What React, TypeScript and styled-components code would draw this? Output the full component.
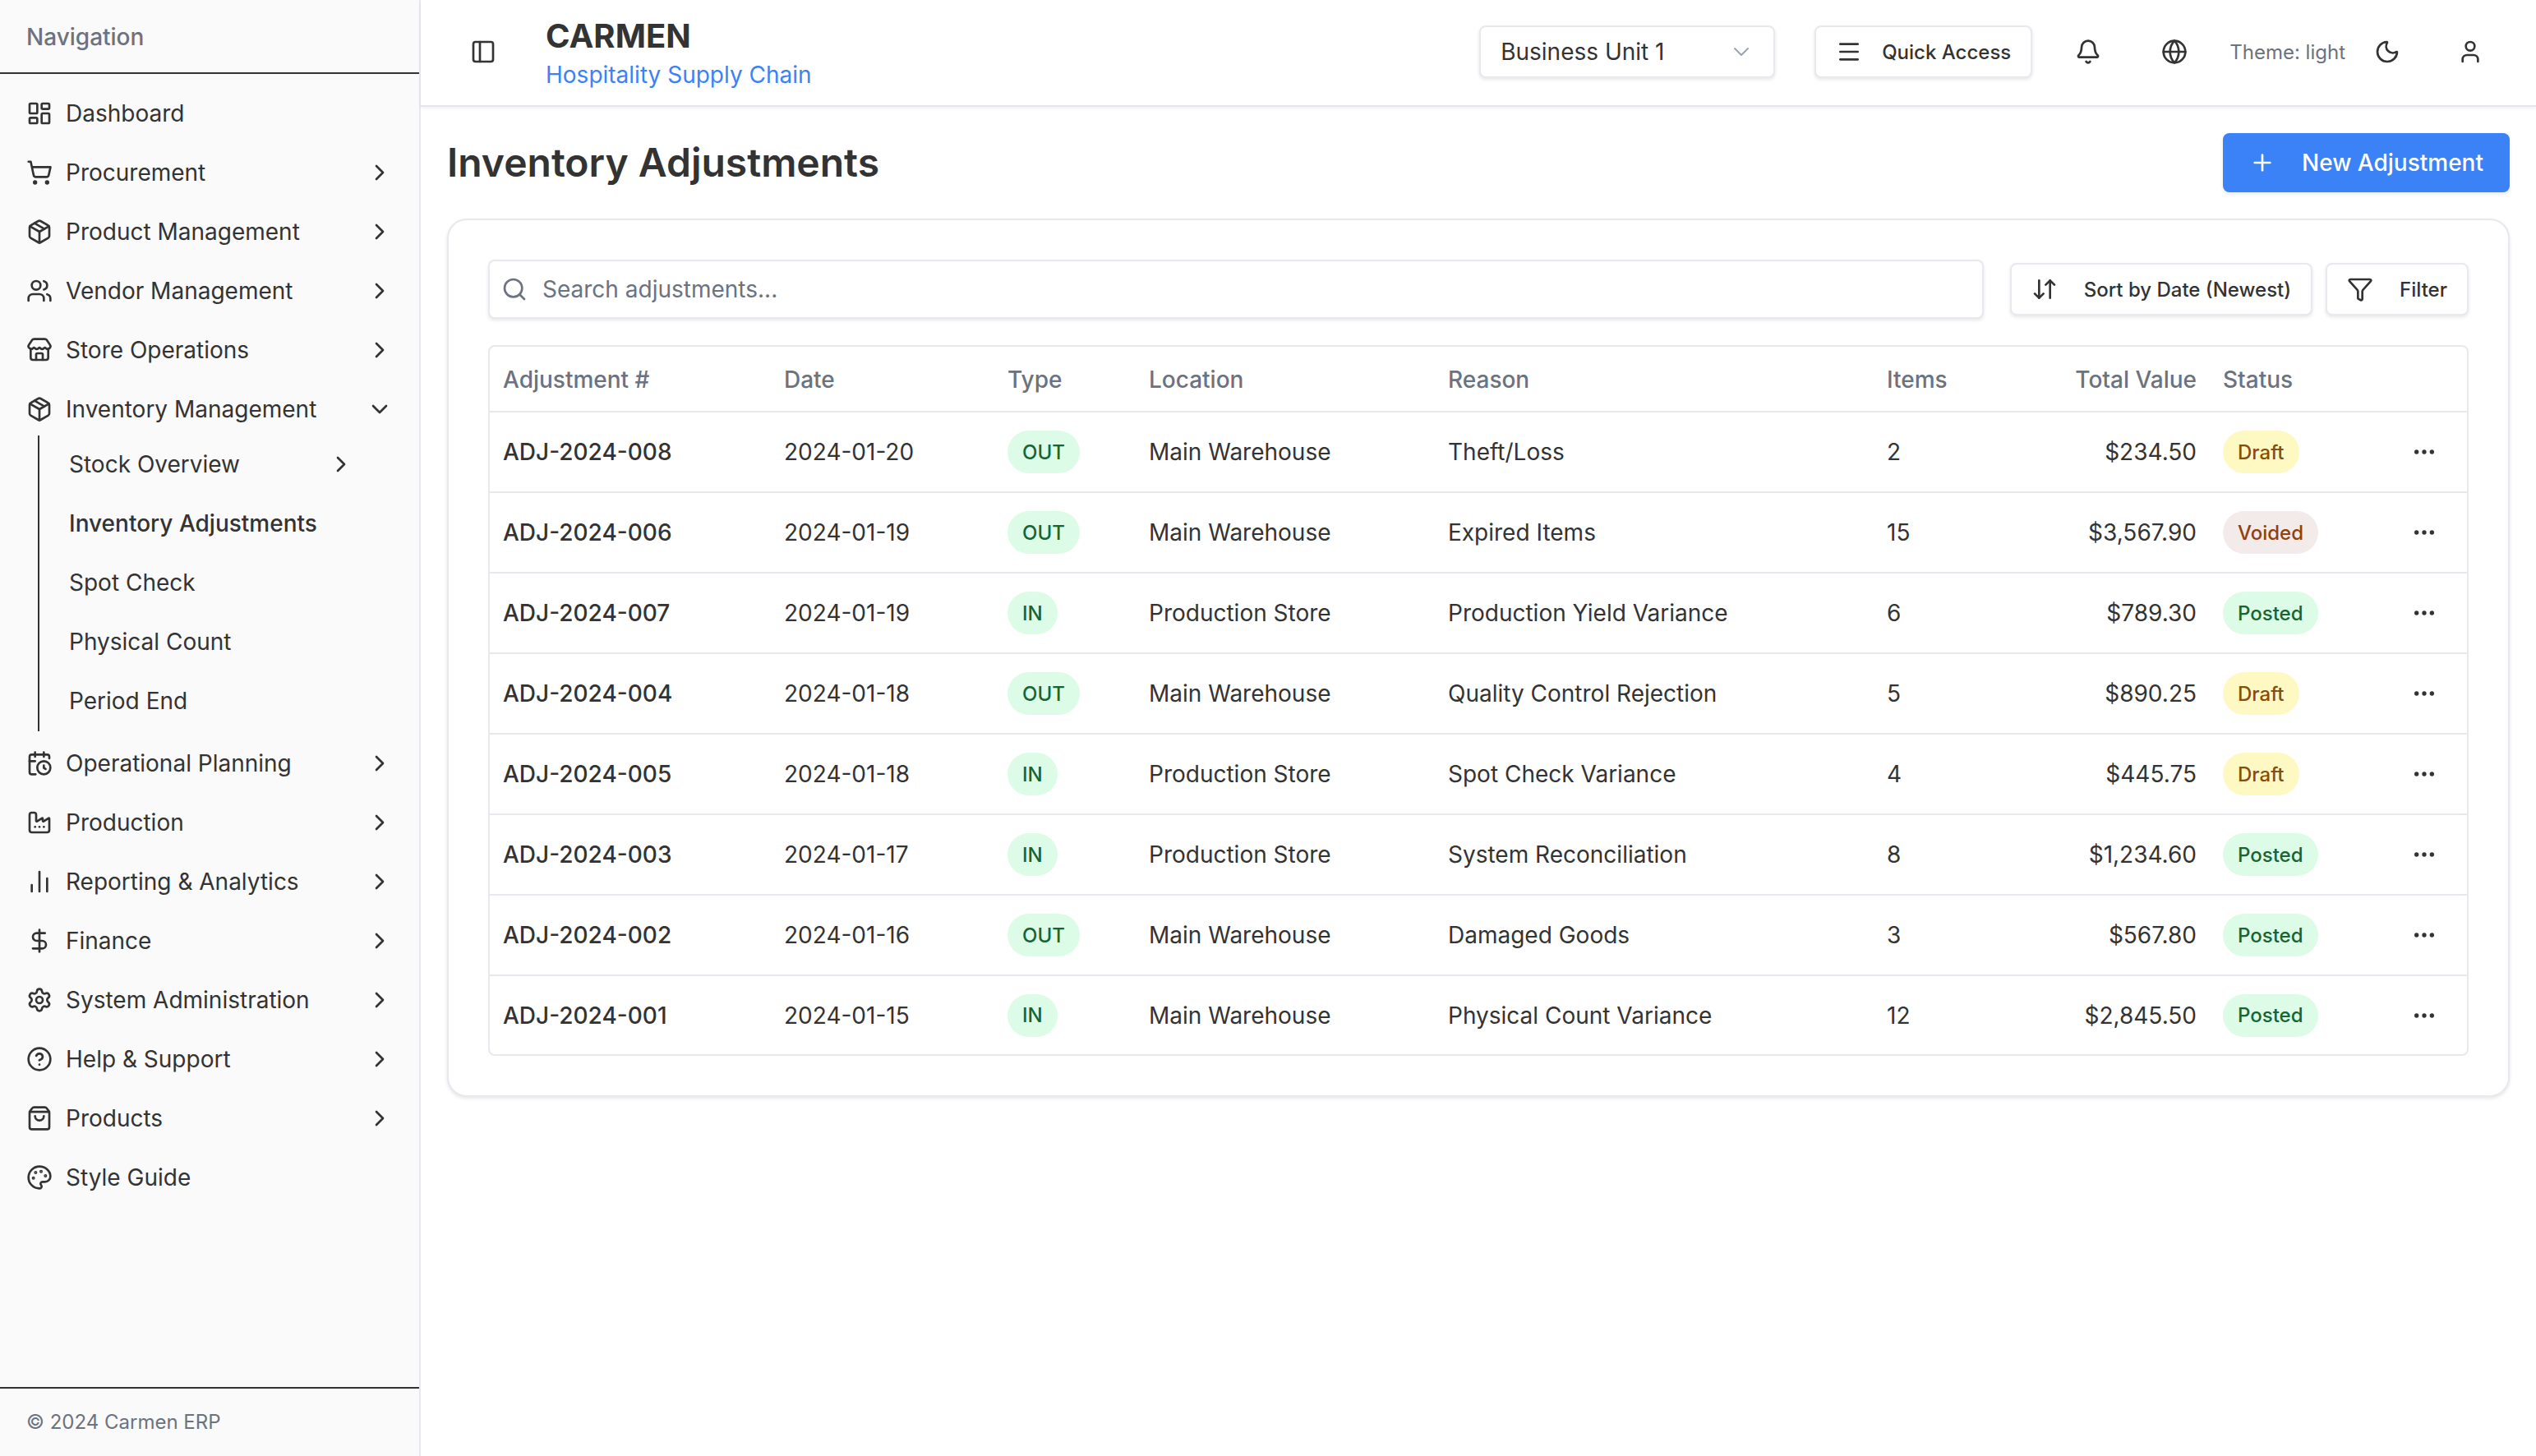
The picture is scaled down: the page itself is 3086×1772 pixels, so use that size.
import React from 'react';
import styled, { createGlobalStyle } from 'styled-components';
import {
  LayoutDashboard, ShoppingCart, Package, Users, Store, CalendarClock, Factory, ChartNoAxesColumn,
  DollarSign, Settings, CircleHelp, ShoppingBag, Palette, ChevronRight, ChevronDown, PanelLeft,
  Menu, Bell, Globe, Moon, User, Plus, Search, ArrowDownUp, Funnel, Ellipsis,
} from 'lucide-react';

const Global = createGlobalStyle`
  html, body { margin: 0; padding: 0; background: #fff; }
  body { font-family: Inter, "Liberation Sans", sans-serif; color: #333; }
  * { box-sizing: border-box; }
`;

const Shell = styled.div`
  display: flex;
  width: 3086px;
  height: 1772px;
  overflow: hidden;
`;
const Sidebar = styled.aside`
  width: 512px;
  flex: none;
  display: flex;
  flex-direction: column;
  background: #fafafa;
  border-right: 2px solid #e8e8ee;
`;
const SideHead = styled.div`
  height: 90px;
  flex: none;
  padding: 2px 32px 0;
  display: flex;
  align-items: center;
  font-size: 28px;
  font-weight: 500;
  color: #6b7280;
  border-bottom: 2px solid #333;
`;
const Nav = styled.nav`
  flex: 1;
  display: flex;
  flex-direction: column;
  gap: 8px;
  padding: 16px 32px;
`;
const NavItem = styled.div`
  height: 64px;
  display: flex;
  align-items: center;
  gap: 16px;
  font-size: 28px;
  color: #333;
`;
const NavLabel = styled.span`
  flex: 1;
`;
const SubList = styled.div`
  margin: -8px 0 -1px 14px;
  padding-left: 36px;
  padding-right: 47px;
  border-left: 2px solid #333;
  display: flex;
  flex-direction: column;
`;
const SubItem = styled.div<{ $active?: boolean }>`
  height: 72px;
  padding-bottom: 2px;
  display: flex;
  align-items: center;
  justify-content: space-between;
  font-size: 28px;
  font-weight: ${p => (p.$active ? 500 : 400)};
  color: #333;
`;
const SideFoot = styled.div`
  height: 84px;
  flex: none;
  padding: 0 32px 2px;
  display: flex;
  align-items: center;
  font-size: 24px;
  color: #6b7280;
  border-top: 2px solid #333;
`;
const Main = styled.div`
  flex: 1;
  min-width: 0;
  display: flex;
  flex-direction: column;
`;
const Header = styled.header`
  height: 130px;
  flex: none;
  display: flex;
  align-items: center;
  padding: 0 30px 2px 60px;
  background: #fff;
  border-bottom: 2px solid #e5e5eb;
  box-shadow: 0 2px 4px rgba(0, 0, 0, 0.06);
`;
const IconSlot = styled.span<{ $w: number }>`
  display: inline-flex;
  align-items: center;
  justify-content: center;
  width: ${p => p.$w}px;
  flex: none;
  color: #333;
`;
const Brand = styled.div`
  flex: 1;
  display: flex;
  flex-direction: column;
  margin: 9px 0 0 60px;
`;
const BrandName = styled.div`
  font-size: 40px;
  line-height: 48px;
  font-weight: 700;
  color: #333;
`;
const BrandSub = styled.div`
  font-size: 28px;
  line-height: 47px;
  color: #3b82f6;
`;
const HeaderTools = styled.div`
  display: flex;
  align-items: center;
`;
const SelectBox = styled.div`
  width: 360px;
  height: 64px;
  display: flex;
  align-items: center;
  justify-content: space-between;
  padding: 0 23px 0 24px;
  font-size: 28px;
  color: #333;
  background: #fff;
  border: 2px solid #e8e8ee;
  border-radius: 8px;
  box-shadow: 0 2px 4px rgba(0, 0, 0, 0.1);
  margin-right: 48px;
  svg { color: #9ca3af; }
`;
const OutlineButton = styled.button`
  height: 64px;
  display: inline-flex;
  align-items: center;
  gap: 32px;
  padding: 0 24px;
  font: 500 24px Inter, sans-serif;
  color: #333;
  background: #fff;
  border: 2px solid #e8e8ee;
  border-radius: 8px;
  box-shadow: 0 2px 4px rgba(0, 0, 0, 0.1);
`;
const QuickButton = styled(OutlineButton)`
  gap: 24px;
  margin-right: 15px;
`;
const ThemeText = styled.span`
  font-size: 24px;
  color: #6b7280;
  margin-left: 15px;
`;
const Content = styled.main`
  flex: 1;
  display: flex;
  flex-direction: column;
  gap: 32px;
  padding: 32px;
`;
const TitleRow = styled.div`
  display: flex;
  align-items: center;
  justify-content: space-between;
`;
const Title = styled.h1`
  margin: 0;
  padding-bottom: 2px;
  font-size: 48px;
  font-weight: 600;
  color: #333;
`;
const PrimaryButton = styled.button`
  height: 72px;
  display: inline-flex;
  align-items: center;
  gap: 32px;
  padding: 0 32px;
  font: 500 28px Inter, sans-serif;
  color: #fff;
  background: #3b82f6;
  border: none;
  border-radius: 8px;
  box-shadow: 0 2px 4px rgba(0, 0, 0, 0.1);
`;
const Card = styled.section`
  padding: 48px;
  background: #fff;
  border: 2px solid #e8e8ee;
  border-radius: 24px;
  box-shadow: 0 2px 4px rgba(0, 0, 0, 0.1);
  display: flex;
  flex-direction: column;
  gap: 32px;
`;
const Toolbar = styled.div`
  display: flex;
  align-items: center;
  gap: 16px;
`;
const SearchBox = styled.div`
  flex: 1;
  height: 72px;
  display: flex;
  align-items: center;
  gap: 18px;
  padding: 0 14px;
  font-size: 28px;
  color: #6b7280;
  background: #fff;
  border: 2px solid #e8e8ee;
  border-radius: 8px;
  box-shadow: 0 2px 4px rgba(0, 0, 0, 0.1);
  margin-right: 16px;
`;
const TableWrap = styled.div`
  border: 2px solid #e8e8ee;
  border-radius: 8px;
  overflow: hidden;
`;
const Table = styled.table`
  width: 100%;
  table-layout: fixed;
  border-collapse: collapse;
  font-size: 28px;
  color: #333;
`;
const Th = styled.th<{ $right?: boolean }>`
  height: 79px;
  padding: 2px 16px 0;
  font-weight: 500;
  color: #6b7280;
  text-align: ${p => (p.$right ? 'right' : 'left')};
`;
const HeadRow = styled.tr`
  border-bottom: 2px solid #e8e8ee;
`;
const Td = styled.td<{ $right?: boolean; $bold?: boolean }>`
  height: 98px;
  padding: 0 16px;
  font-weight: ${p => (p.$bold ? 500 : 400)};
  text-align: ${p => (p.$right ? 'right' : 'left')};
`;
const Row = styled.tr`
  border-bottom: 2px solid #e8e8ee;
  &:last-child { border-bottom: none; }
  &:last-child > td { height: 96px; }
`;
const Dots = styled(Ellipsis)`
  display: block;
  margin: 0 auto;
`;
const palette = {
  green: ['#dcfce7', '#166534'],
  yellow: ['#fef9c3', '#854d0e'],
  rose: ['#f3ebea', '#92400e'],
};
const Badge = styled.span<{ $tone: keyof typeof palette }>`
  display: inline-flex;
  align-items: center;
  height: 52px;
  padding: 0 18px;
  border-radius: 26px;
  font-size: 24px;
  font-weight: 500;
  background: ${p => palette[p.$tone][0]};
  color: ${p => palette[p.$tone][1]};
  vertical-align: middle;
`;

const navTop = [
  { label: 'Dashboard', Icon: LayoutDashboard, leaf: true },
  { label: 'Procurement', Icon: ShoppingCart },
  { label: 'Product Management', Icon: Package },
  { label: 'Vendor Management', Icon: Users },
  { label: 'Store Operations', Icon: Store },
];
const navBottom = [
  { label: 'Operational Planning', Icon: CalendarClock },
  { label: 'Production', Icon: Factory },
  { label: 'Reporting & Analytics', Icon: ChartNoAxesColumn },
  { label: 'Finance', Icon: DollarSign },
  { label: 'System Administration', Icon: Settings },
  { label: 'Help & Support', Icon: CircleHelp },
  { label: 'Products', Icon: ShoppingBag },
  { label: 'Style Guide', Icon: Palette, leaf: true },
];
const rows = [
  ['ADJ-2024-008', '2024-01-20', 'OUT', 'Main Warehouse', 'Theft/Loss', '2', '$234.50', 'Draft'],
  ['ADJ-2024-006', '2024-01-19', 'OUT', 'Main Warehouse', 'Expired Items', '15', '$3,567.90', 'Voided'],
  ['ADJ-2024-007', '2024-01-19', 'IN', 'Production Store', 'Production Yield Variance', '6', '$789.30', 'Posted'],
  ['ADJ-2024-004', '2024-01-18', 'OUT', 'Main Warehouse', 'Quality Control Rejection', '5', '$890.25', 'Draft'],
  ['ADJ-2024-005', '2024-01-18', 'IN', 'Production Store', 'Spot Check Variance', '4', '$445.75', 'Draft'],
  ['ADJ-2024-003', '2024-01-17', 'IN', 'Production Store', 'System Reconciliation', '8', '$1,234.60', 'Posted'],
  ['ADJ-2024-002', '2024-01-16', 'OUT', 'Main Warehouse', 'Damaged Goods', '3', '$567.80', 'Posted'],
  ['ADJ-2024-001', '2024-01-15', 'IN', 'Main Warehouse', 'Physical Count Variance', '12', '$2,845.50', 'Posted'],
];
const tone = (s: string): keyof typeof palette => (s === 'Draft' ? 'yellow' : s === 'Voided' ? 'rose' : 'green');
const colWidths = [342, 272, 172, 364, 534, 170, 239, 209];

function Item({ label, Icon, leaf, open }: { label: string; Icon: React.ComponentType<{ size?: number }>; leaf?: boolean; open?: boolean }) {
  return (
    <NavItem>
      <Icon size={32} />
      <NavLabel>{label}</NavLabel>
      {!leaf && (open ? <ChevronDown size={32} /> : <ChevronRight size={32} />)}
    </NavItem>
  );
}

export default function App() {
  return (
    <Shell>
      <Global />
      <Sidebar>
        <SideHead>Navigation</SideHead>
        <Nav>
          {navTop.map(n => <Item key={n.label} {...n} />)}
          <Item label="Inventory Management" Icon={Package} open />
          <SubList>
            <SubItem>Stock Overview <ChevronRight size={32} /></SubItem>
            <SubItem $active>Inventory Adjustments</SubItem>
            <SubItem>Spot Check</SubItem>
            <SubItem>Physical Count</SubItem>
            <SubItem>Period End</SubItem>
          </SubList>
          {navBottom.map(n => <Item key={n.label} {...n} />)}
        </Nav>
        <SideFoot>© 2024 Carmen ERP</SideFoot>
      </Sidebar>
      <Main>
        <Header>
          <IconSlot $w={32}><PanelLeft size={32} /></IconSlot>
          <Brand>
            <BrandName>CARMEN</BrandName>
            <BrandSub>Hospitality Supply Chain</BrandSub>
          </Brand>
          <HeaderTools>
            <SelectBox>Business Unit 1 <ChevronDown size={32} strokeWidth={1.5} /></SelectBox>
            <QuickButton><Menu size={32} /> Quick Access</QuickButton>
            <IconSlot $w={106}><Bell size={32} /></IconSlot>
            <IconSlot $w={104}><Globe size={32} /></IconSlot>
            <ThemeText>Theme: light</ThemeText>
            <IconSlot $w={102}><Moon size={32} /></IconSlot>
            <IconSlot $w={100}><User size={32} /></IconSlot>
          </HeaderTools>
        </Header>
        <Content>
          <TitleRow>
            <Title>Inventory Adjustments</Title>
            <PrimaryButton><Plus size={32} /> New Adjustment</PrimaryButton>
          </TitleRow>
          <Card>
            <Toolbar>
              <SearchBox><Search size={32} /> Search adjustments...</SearchBox>
              <OutlineButton><ArrowDownUp size={32} /> Sort by Date (Newest)</OutlineButton>
              <OutlineButton><Funnel size={32} /> Filter</OutlineButton>
            </Toolbar>
            <TableWrap>
              <Table>
                <colgroup>
                  {colWidths.map((w, i) => <col key={i} style={{ width: w }} />)}
                  <col />
                </colgroup>
                <thead>
                  <HeadRow>
                    <Th>Adjustment #</Th>
                    <Th>Date</Th>
                    <Th>Type</Th>
                    <Th>Location</Th>
                    <Th>Reason</Th>
                    <Th>Items</Th>
                    <Th $right>Total Value</Th>
                    <Th>Status</Th>
                    <Th />
                  </HeadRow>
                </thead>
                <tbody>
                  {rows.map(r => (
                    <Row key={r[0]}>
                      <Td $bold>{r[0]}</Td>
                      <Td>{r[1]}</Td>
                      <Td><Badge $tone="green">{r[2]}</Badge></Td>
                      <Td>{r[3]}</Td>
                      <Td>{r[4]}</Td>
                      <Td>{r[5]}</Td>
                      <Td $right>{r[6]}</Td>
                      <Td><Badge $tone={tone(r[7])}>{r[7]}</Badge></Td>
                      <Td><Dots size={32} /></Td>
                    </Row>
                  ))}
                </tbody>
              </Table>
            </TableWrap>
          </Card>
        </Content>
      </Main>
    </Shell>
  );
}
